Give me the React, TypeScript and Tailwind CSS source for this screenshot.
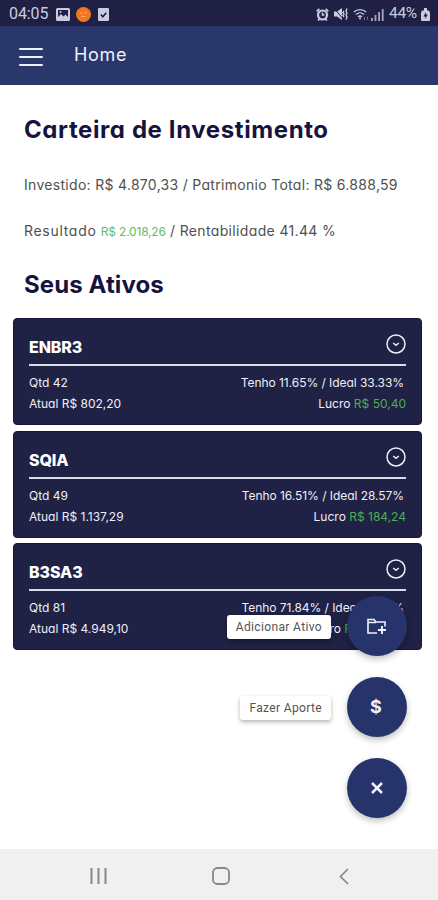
import React from 'react';

type Asset = {
  name: string;
  qty: string;
  current: string;
  have: string;
  ideal: string;
  profit: string;
};

const assets: Asset[] = [
  { name: 'ENBR3', qty: '42', current: '802,20', have: '11.65%', ideal: '33.33%', profit: '50,40' },
  { name: 'SQIA', qty: '49', current: '1.137,29', have: '16.51%', ideal: '28.57%', profit: '184,24' },
  { name: 'B3SA3', qty: '81', current: '4.949,10', have: '71.84%', ideal: '38.10%', profit: '1.783,62' },
];

const StatusBar: React.FC = () => (
  <div className="flex h-[26px] items-center justify-between bg-[#1f2043] pt-[2px] pr-[8px] pl-[9px] font-[Roboto,sans-serif] text-[#c9cbe0]">
    <div className="flex items-center">
      <span className="w-[41px] text-[16px] tracking-[-0.1px] whitespace-nowrap">04:05</span>
      <svg className="ml-[6px]" width="14" height="13" viewBox="0 0 14 13">
        <path fill="currentColor" fillRule="evenodd" d="M1.500 0h11A1.500 1.500 0 0 1 14 1.500v10a1.500 1.500 0 0 1-1.500 1.500h-11A1.500 1.500 0 0 1 0 11.500v-10A1.500 1.500 0 0 1 1.500 0zM2 2v7l3-3 2.500 2.500L9.500 6.500 12 9V2z" />
        <circle cx="4.500" cy="4" r="1" fill="currentColor" />
      </svg>
      <svg className="ml-[6px]" width="15" height="15" viewBox="0 0 15 15">
        <circle cx="7.500" cy="7.500" r="7.500" fill="#f4741f" />
        <path d="M4.500 5.500l2 1.500M10.500 5l-2 1.500M5.500 9.500h4" fill="none" stroke="#ffb070" strokeWidth="1.200" />
      </svg>
      <svg className="ml-[7px]" width="11" height="13" viewBox="0 0 11 13">
        <rect width="11" height="13" rx="1" fill="currentColor" />
        <path d="M2.800 6.500l2 2.200 3.500-4" fill="none" stroke="#1f2043" strokeWidth="1.600" />
      </svg>
    </div>
    <div className="flex items-center">
      <svg width="13" height="13" viewBox="0 0 13 13" fill="none" stroke="currentColor">
        <circle cx="6.500" cy="7" r="4.500" strokeWidth="2.200" />
        <path d="M.7 3.300L3.300.8M12.300 3.300L9.700.8M2 12.500l2-2M11 12.500l-2-2M6.500 4.500V7h2" strokeWidth="1.700" />
      </svg>
      <svg className="ml-[5px]" width="15" height="14" viewBox="0 0 15 14" fill="none" stroke="currentColor">
        <path d="M0 4.500h3l5-3.500v12L3 9.500H0z" fill="currentColor" stroke="none" />
        <path d="M.5 1.500l9 11" stroke="#1f2043" strokeWidth="1" />
        <path d="M10 4l-1 1.500 1 1.500-1 1.500 1 1.500M13 1.500L12 4l1 2-1 2 1 2-1 2.500" strokeWidth="1.400" />
      </svg>
      <svg className="ml-[4px]" width="17" height="13" viewBox="0 0 17 13" fill="none" stroke="currentColor">
        <path d="M.8 4c3.500-3.300 8.900-3.300 12.400 0M3 6.500c2.300-2.100 5.700-2.100 8 0M5 8.800c1.200-1 2.800-1 4 0" strokeWidth="1.300" />
        <path d="M7 12L5.500 9.500h3z" fill="currentColor" stroke="none" />
        <path d="M11.500 9V12M14.500 8.500v3" strokeWidth="1" opacity=".5" />
      </svg>
      <svg className="ml-[1px]" width="13" height="13" viewBox="0 0 13 13" fill="currentColor">
        <path d="M0 10h1.800v3H0zM3.600 7h1.800v6H3.600zM7.200 4H9v9H7.200zM10.800 1h1.800v12h-1.800z" opacity=".8" />
      </svg>
      <span className="ml-[5px] w-[30px] text-[15.500px] tracking-[-0.3px] whitespace-nowrap">44%</span>
      <svg className="ml-[2px]" width="9" height="13" viewBox="0 0 9 13">
        <path d="M3 0h3v2.500h2L9 5v7a1 1 0 0 1-1 1H1a1 1 0 0 1-1-1V5l1-2.500h2z" fill="currentColor" />
        <path d="M5 4L2.500 8.500h1.800v2.500l2.500-4.500H5z" fill="#1f2043" />
      </svg>
    </div>
  </div>
);

const Header: React.FC = () => (
  <header className="flex h-[59px] items-center bg-[#2a376b] pl-[19px]">
    <button className="mt-[2px] flex w-6 flex-col gap-[6px]" aria-label="Menu">
      <span className="h-[2px] rounded-full bg-[#eef0fa]" />
      <span className="h-[2px] rounded-full bg-[#eef0fa]" />
      <span className="h-[2px] rounded-full bg-[#eef0fa]" />
    </button>
    <span className="mb-[3px] ml-[31px] text-[18px] tracking-[0.7px] text-[#eef0fa]">Home</span>
  </header>
);

const AssetCard: React.FC<{ asset: Asset }> = ({ asset }) => (
  <div className="h-[107px] rounded-[4px] border border-[#14153a] bg-[#1f2145] px-[15px] pt-[13px] text-[#eeeff7]">
    <div className="flex h-[34px] items-start justify-between border-b-2 border-[#d8dbea]">
      <h3 className="mt-[3px] text-[16px] leading-6 font-extrabold tracking-[-0.1px] text-white">{asset.name}</h3>
      <svg className="mt-[2px]" width="20" height="20" viewBox="0 0 20 20" fill="none" stroke="currentColor">
        <circle cx="10" cy="10" r="9" strokeWidth="1.500" />
        <path d="M7.200 9l2.800 2.300L12.800 9" strokeWidth="1.500" />
      </svg>
    </div>
    <div className="mt-[6px] flex justify-between text-[12px] leading-[21px] whitespace-nowrap">
      <div>
        <p>Qtd {asset.qty}</p>
        <p>Atual R$ {asset.current}</p>
      </div>
      <div className="text-right">
        <p className="pr-[2px] tracking-[-0.05px]">Tenho {asset.have} / Ideal {asset.ideal}</p>
        <p>
          Lucro{' '}
          <span className={asset.profit.length > 6 ? 'tracking-[-0.400px] text-[#4caf50]' : 'text-[#4caf50]'}>
            R$ {asset.profit}
          </span>
        </p>
      </div>
    </div>
  </div>
);

const Fab: React.FC<{ label?: string; children: React.ReactNode }> = ({ label, children }) => (
  <div className="flex items-center gap-4">
    {label && (
      <span className="mt-[2px] rounded-[3px] bg-white px-[9px] font-[Roboto,sans-serif] text-[12px] leading-[24px] tracking-[0.360px] whitespace-nowrap text-[#555] shadow-[0_2px_4px_rgba(0,0,0,0.3)]">
        {label}
      </span>
    )}
    <button className="flex size-[60px] items-center justify-center rounded-full bg-[#27346b] text-[#eef0fa] shadow-[0_3px_6px_rgba(0,0,0,0.25)]">
      {children}
    </button>
  </div>
);

const FloatingMenu: React.FC = () => (
  <div className="absolute right-[31px] bottom-[82px] flex flex-col items-end gap-[21px]">
    <Fab label="Adicionar Ativo">
      <svg width="20" height="17" viewBox="0 0 20 17" fill="none" stroke="currentColor" strokeWidth="1.600">
        <path d="M10 15H1V1.500h6l2 2.500h9v4.500M1 4.500h8" />
        <path d="M15 8v8M11 12h8" strokeWidth="2" />
      </svg>
    </Fab>
    <Fab label="Fazer Aporte">
      <span className="-ml-[2px] text-[18px] leading-none font-bold">$</span>
    </Fab>
    <Fab>
      <svg width="12" height="12" viewBox="0 0 12 12" fill="none" stroke="currentColor" strokeWidth="2.500">
        <path d="M1 1l10 10M11 1L1 11" />
      </svg>
    </Fab>
  </div>
);

const NavigationBar: React.FC = () => (
  <div className="flex h-[51px] items-center bg-[#f0f0f0] pt-[3px] pl-[90px] text-[#888]">
    <svg width="17" height="16" viewBox="0 0 17 16" fill="none" stroke="currentColor" strokeWidth="2">
      <path d="M1.500 0v16M8.500 0v16M15.500 0v16" />
    </svg>
    <svg className="ml-[105px]" width="18" height="18" viewBox="0 0 18 18" fill="none" stroke="currentColor" strokeWidth="1.800">
      <rect x="1" y="1" width="16" height="16" rx="4.500" />
    </svg>
    <svg className="ml-[109px]" width="10" height="17" viewBox="0 0 10 17" fill="none" stroke="currentColor" strokeWidth="1.700">
      <path d="M9 1L1.500 8.500 9 16" />
    </svg>
  </div>
);

const App: React.FC = () => {
  return (
    <div className="relative flex h-[900px] w-[438px] flex-col overflow-hidden bg-white font-[Inter,sans-serif] [font-feature-settings:'cv11']">
      <StatusBar />
      <Header />
      <main className="flex-1">
        <section className="px-6 whitespace-nowrap">
          <h1 className="mt-[29px] text-[24px] leading-8 font-bold tracking-[0.6px] text-[#16143f]">
            Carteira de Investimento
          </h1>
          <p className="mt-[29px] text-[14px] leading-5 tracking-[0.3px] text-[#505050]">
            Investido: R$ 4.870,33 / Patrimonio Total: R$ 6.888,59
          </p>
          <p className="mt-[26px] text-[14px] leading-5 tracking-[0.35px] text-[#505050]">
            <span className="tracking-[0.7px]">Resultado</span>{' '}
            <span className="text-[12px] tracking-[-0.2px] text-[#66bb6a]">R$ 2.018,26</span> / Rentabilidade 41.44 %
          </p>
          <h2 className="mt-[27px] text-[24px] leading-8 font-bold tracking-[0.1px] text-[#16143f]">Seus Ativos</h2>
        </section>
        <section className="mt-[17px] mr-[16px] ml-[13px] flex flex-col gap-[5.500px]">
          {assets.map((asset) => (
            <AssetCard key={asset.name} asset={asset} />
          ))}
        </section>
      </main>
      <NavigationBar />
      <FloatingMenu />
    </div>
  );
};

export default App;
